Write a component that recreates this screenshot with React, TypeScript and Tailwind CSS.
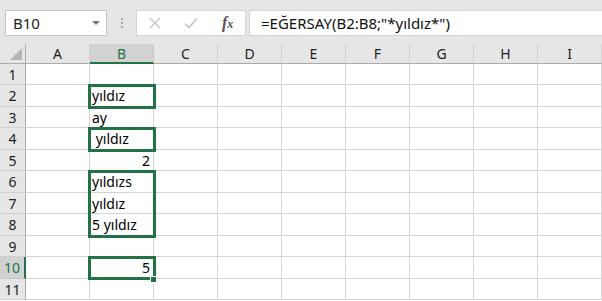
import React from 'react';

const COLS = ['A', 'B', 'C', 'D', 'E', 'F', 'G', 'H', 'I'];

// row heights alternate so the grid lands on Excel's ~21.5px rows
const ROW_H = ['h-[21px]', 'h-[22px]'];

const CELLS: Record<string, { text: string; right?: boolean }> = {
  B2: { text: 'yıldız' },
  B3: { text: 'ay' },
  B4: { text: '\u00a0yıldız' },
  B5: { text: '2', right: true },
  B6: { text: 'yıldızs' },
  B7: { text: 'yıldız' },
  B8: { text: '5 yıldız' },
  B10: { text: '5', right: true },
};

const font = { fontFamily: '"Noto Sans", "Open Sans", sans-serif' };

function Toolbar() {
  return (
    <div className="flex h-[44px] items-start bg-[#e6e6e6] pt-[10px]" style={font}>
      {/* name box */}
      <div className="ml-[5px] flex h-[26px] w-[102px] items-center justify-between border border-[#c6c6c6] bg-white pl-[7px] pr-[6px]">
        <span className="text-[15px] leading-none text-[#222]">B10</span>
        <span className="h-0 w-0 border-x-[4px] border-t-[4px] border-x-transparent border-t-[#777]" />
      </div>

      {/* grip dots */}
      <div className="ml-[14px] mt-[8px] flex flex-col gap-[2px]">
        <span className="h-[2px] w-[2px] bg-[#a8a8a8]" />
        <span className="h-[2px] w-[2px] bg-[#a8a8a8]" />
        <span className="h-[2px] w-[2px] bg-[#a8a8a8]" />
      </div>

      {/* cancel / enter / fx */}
      <div className="ml-[13px] flex h-[26px] w-[110px] items-center border border-[#d4d4d4] bg-white">
        <svg className="ml-[12px] h-[12px] w-[12px]" viewBox="0 0 12 12">
          <path d="M1 1L11 11M11 1L1 11" stroke="#c4c4c4" strokeWidth={1.4} fill="none" />
        </svg>
        <svg className="ml-[23px] h-[12px] w-[14px]" viewBox="0 0 14 12">
          <path d="M1 6.5L5 10.5L13 1.5" stroke="#c4c4c4" strokeWidth={1.6} fill="none" />
        </svg>
        <span
          className="ml-[24px] text-[16px] italic leading-none text-[#555]"
          style={{ fontFamily: '"Liberation Serif", serif', fontWeight: 700 }}
        >
          f<span className="text-[12px]">x</span>
        </span>
      </div>

      {/* formula input */}
      <div className="ml-[3px] flex h-[26px] flex-1 items-center border border-r-0 border-[#d4d4d4] bg-white pl-[11px]">
        <span className="text-[15px] leading-none text-[#111]">=EĞERSAY(B2:B8;"*yıldız*")</span>
      </div>
    </div>
  );
}

function HeaderRow() {
  return (
    <div className="flex h-[20px] bg-[#e6e6e6] text-[14px] text-[#222]" style={font}>
      <div className="relative w-[26px] border-b border-r border-[#ababab]">
        <svg className="absolute bottom-[3px] right-[3px] h-[12px] w-[12px]" viewBox="0 0 12 12">
          <path d="M12 0L12 12L0 12Z" fill="#b4b4b4" />
        </svg>
      </div>
      {COLS.map((c) =>
        c === 'B' ? (
          <div
            key={c}
            className="flex w-[64px] items-center justify-center border-b-2 border-r border-b-[#217346] border-r-[#c6c6c6] bg-[#d2d2d2] text-[#217346]"
          >
            {c}
          </div>
        ) : (
          <div
            key={c}
            className="flex w-[64px] items-center justify-center border-b border-r border-b-[#ababab] border-r-[#d0d0d0]"
          >
            {c}
          </div>
        )
      )}
    </div>
  );
}

export default function App() {
  const rows = Array.from({ length: 11 }, (_, i) => i + 1);

  return (
    <div className="h-[301px] w-[602px] overflow-hidden bg-white">
      <Toolbar />
      <HeaderRow />
      <div className="relative" style={font}>
        {rows.map((r, i) => (
          <div key={r} className={`flex ${ROW_H[i % 2]}`}>
            {r === 10 ? (
              <div className="flex w-[26px] items-center justify-center border-b border-r-2 border-b-[#c6c6c6] border-r-[#217346] bg-[#d2d2d2] text-[14px] text-[#217346]">
                {r}
              </div>
            ) : (
              <div className="flex w-[26px] items-center justify-center border-b border-r border-b-[#d0d0d0] border-r-[#ababab] bg-[#e6e6e6] text-[14px] text-[#222]">
                {r}
              </div>
            )}
            {COLS.map((c) => {
              const cell = CELLS[`${c}${r}`];
              return (
                <div
                  key={c}
                  className={`flex w-[64px] items-center whitespace-pre border-b border-r border-[#d4d4d4] px-[2px] text-[14px] text-black ${
                    cell?.right ? 'justify-end pr-[3px]' : ''
                  }`}
                >
                  {cell?.text}
                </div>
              );
            })}
          </div>
        ))}

        {/* green range outlines */}
        <div className="absolute left-[88px] top-[20px] h-[25px] w-[68px] border-[3px] border-[#217346]" />
        <div className="absolute left-[88px] top-[63px] h-[25px] w-[68px] border-[3px] border-[#217346]" />
        <div className="absolute left-[88px] top-[106px] h-[68px] w-[68px] border-[3px] border-[#217346]" />
        <div className="absolute left-[88px] top-[192px] h-[24px] w-[68px] border-[3px] border-[#217346]" />
        {/* fill handle */}
        <div className="absolute left-[150px] top-[212px] h-[7px] w-[7px] border border-white bg-[#217346]" />
      </div>
    </div>
  );
}
